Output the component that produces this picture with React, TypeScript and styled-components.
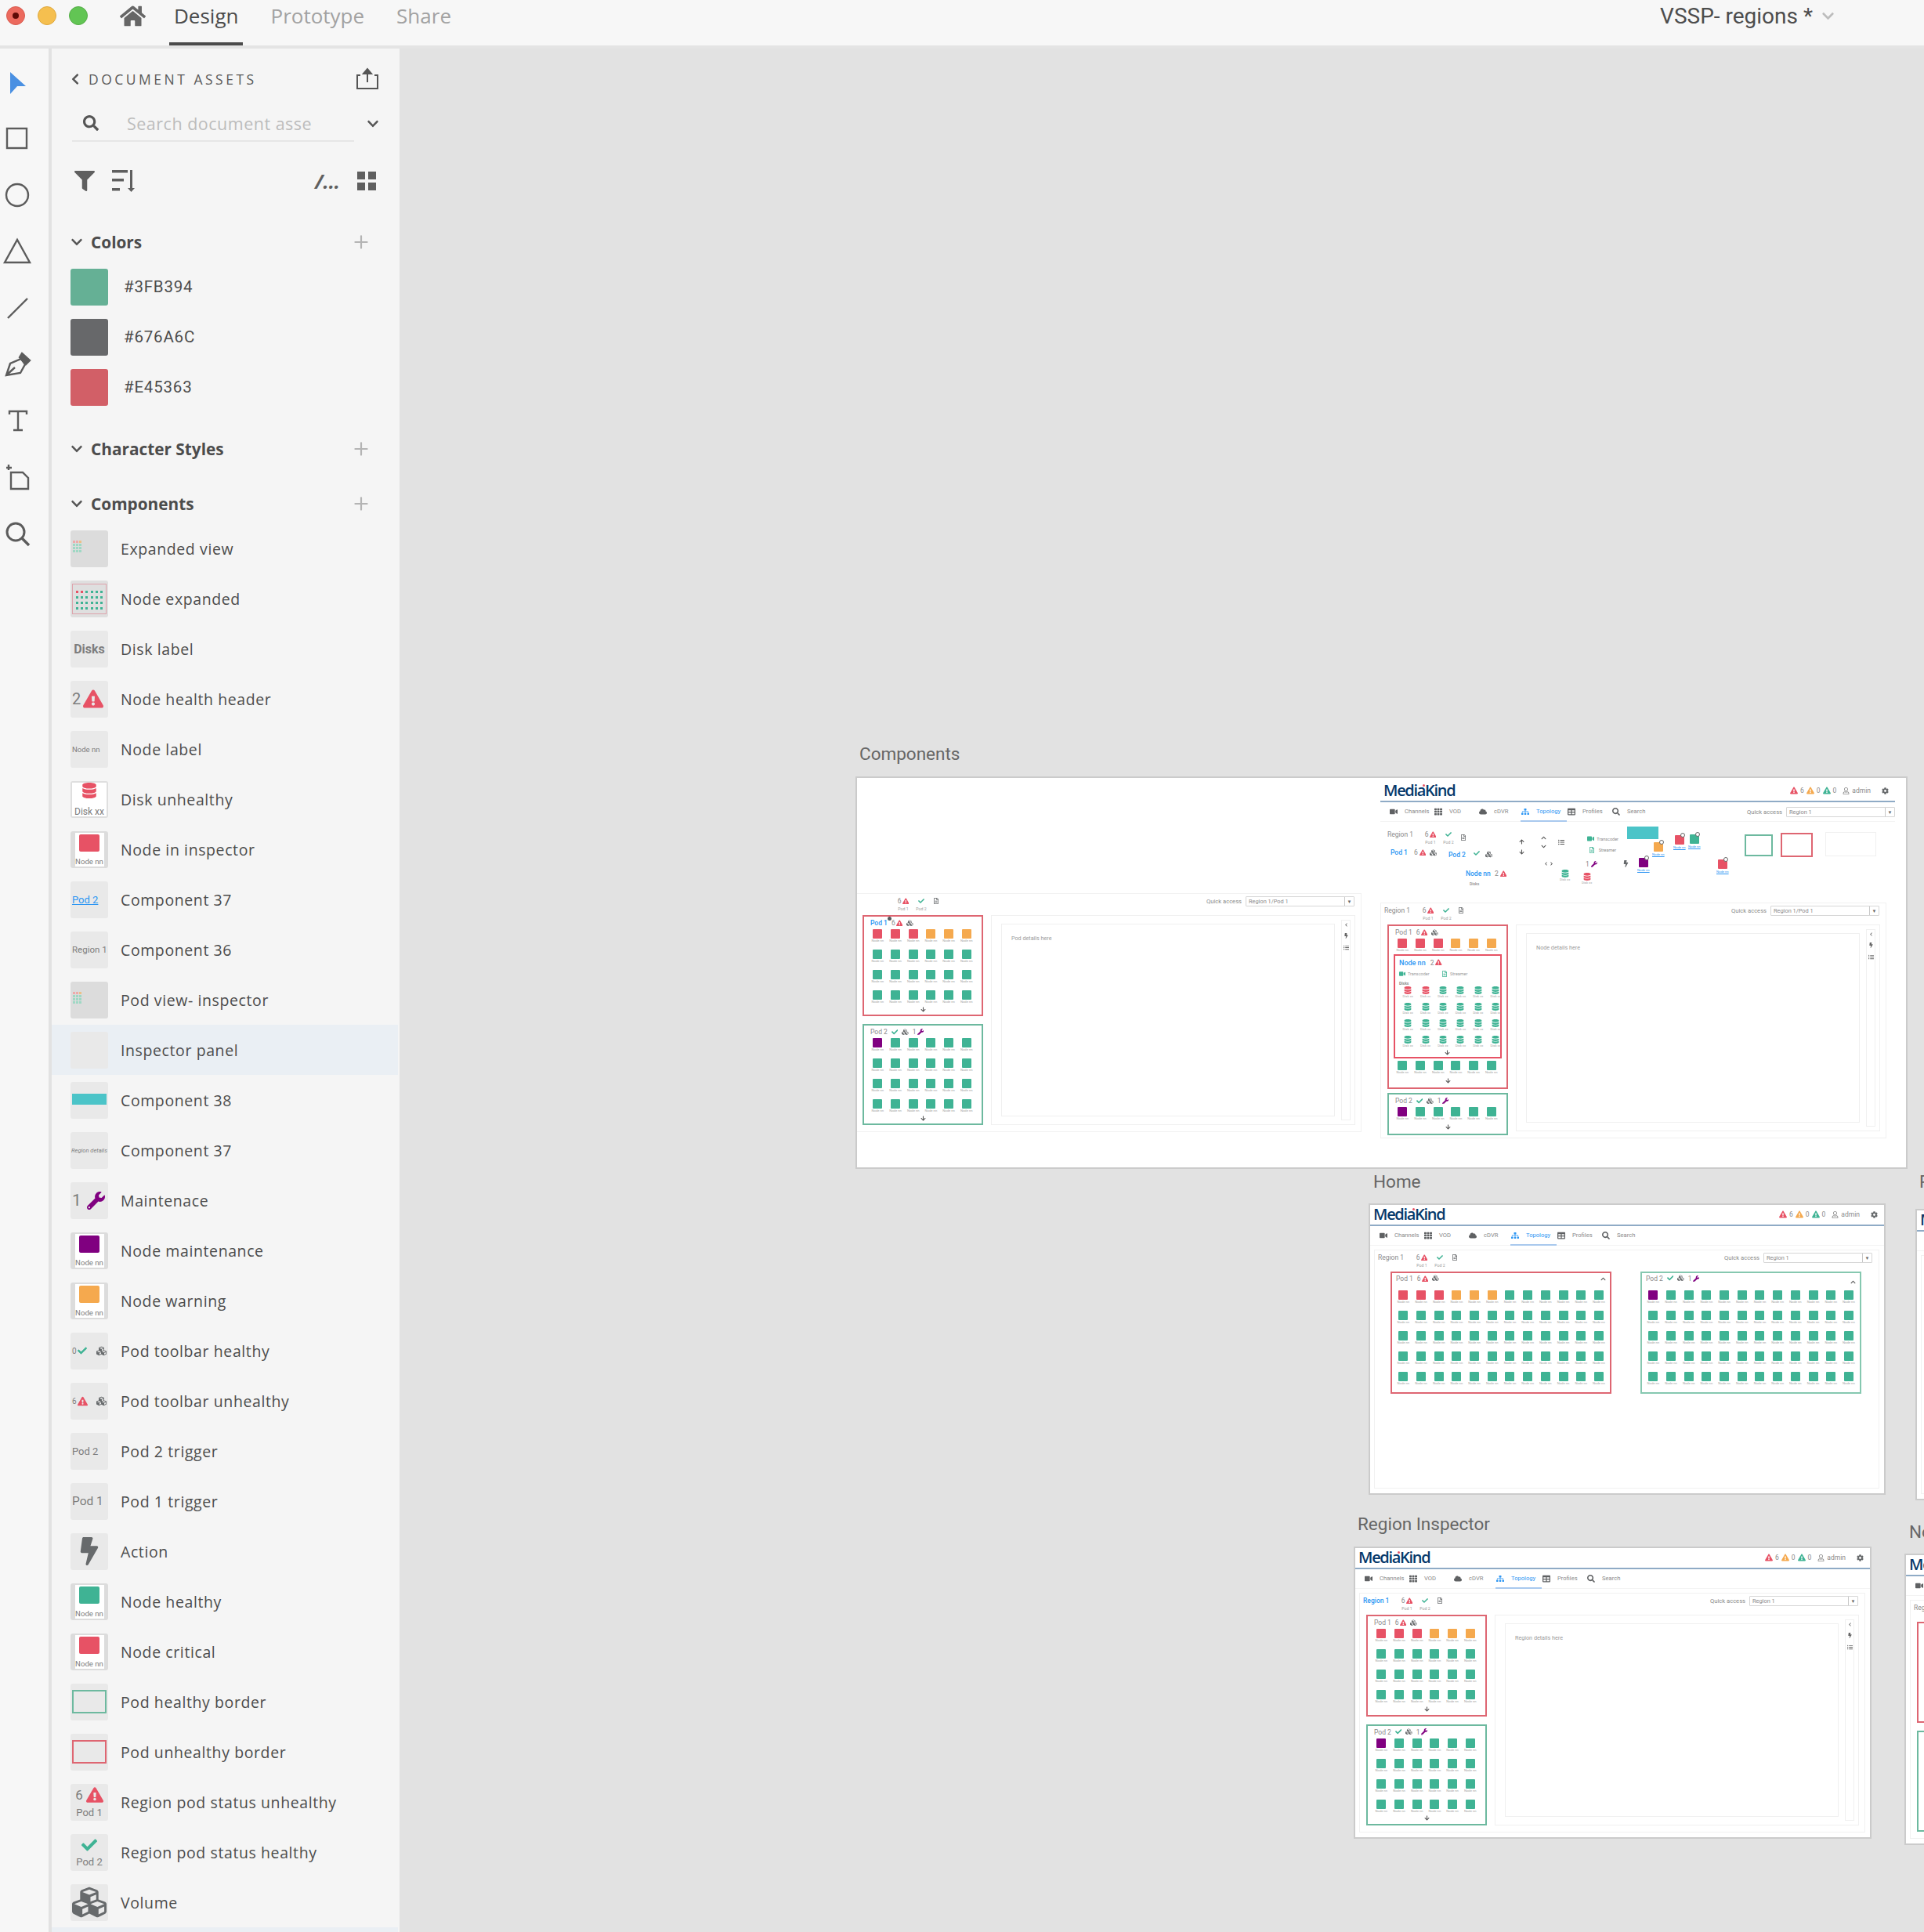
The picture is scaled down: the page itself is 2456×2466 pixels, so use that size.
import React from "react";
import styled, { createGlobalStyle } from "styled-components";
import { Plus } from "lucide-react";
import {
  FaArrowDown,
  FaArrowUp,
  FaBolt,
  FaChevronDown,
  FaChevronLeft,
  FaChevronRight,
  FaChevronUp,
  FaCheck,
  FaCloud,
  FaCog,
  FaCubes,
  FaDatabase,
  FaExclamationTriangle,
  FaFilter,
  FaHome,
  FaListUl,
  FaRegFileAlt,
  FaRegUser,
  FaSearch,
  FaSitemap,
  FaTable,
  FaTh,
  FaVideo,
  FaWrench,
} from "react-icons/fa";

const RED = "#e75265";
const ORANGE = "#f5a94e";
const GREEN = "#3fb394";
const PURPLE = "#800080";
const BLUE = "#2d96f3";
const GREY = "#676a6c";

const CANVAS_X = 510;
const CANVAS_Y = 62;

const GlobalStyle = createGlobalStyle`
  html, body {
    margin: 0;
    padding: 0;
    width: 2456px;
    height: 2466px;
    overflow: hidden;
    background: #e2e2e2;
    font-family: "Roboto", "Liberation Sans", sans-serif;
  }
  * { box-sizing: border-box; }
`;

const Window = styled.div`
  width: 2456px;
  height: 2466px;
  display: flex;
  flex-direction: column;
  overflow: hidden;
`;

const TitleBar = styled.header`
  height: 62px;
  flex: none;
  display: flex;
  align-items: flex-start;
  background: #f7f7f7;
  border-bottom: 4px solid #e4e4e4;
`;

const Lights = styled.div`
  display: flex;
  gap: 16px;
  padding: 8px 0 0 8px;
`;

const Light = styled.span<{ $c: string; $edge: string }>`
  width: 24px;
  height: 24px;
  border-radius: 50%;
  background: ${(p) => p.$c};
  border: 1px solid ${(p) => p.$edge};
  display: flex;
  align-items: center;
  justify-content: center;
`;

const LightDot = styled.span`
  width: 8px;
  height: 8px;
  border-radius: 50%;
  background: #5e0b06;
`;

const HomeButton = styled.div`
  margin-left: 41px;
  height: 40px;
  color: #666;
  display: flex;
  align-items: center;
  font-size: 33px;
`;

const Tabs = styled.nav`
  display: flex;
  margin-left: 30px;
  gap: 29px;
`;

const Tab = styled.div<{ $on?: boolean }>`
  height: 58px;
  padding: 0 6px;
  font-family: "Open Sans", sans-serif;
  font-size: 26px;
  line-height: 41px;
  color: ${(p) => (p.$on ? "#4b4b4b" : "#a2a2a2")};
  border-bottom: 4px solid ${(p) => (p.$on ? "#4b4b4b" : "transparent")};
`;

const DocTitle = styled.div`
  margin-left: auto;
  margin-right: 114px;
  height: 41px;
  display: flex;
  align-items: center;
  gap: 11px;
  font-size: 28px;
  color: #4d4d4d;
  svg {
    color: #bdbdbd;
    font-size: 17px;
  }
`;

const Main = styled.div`
  flex: 1;
  display: flex;
  min-height: 0;
`;

const Rail = styled.aside`
  width: 62px;
  flex: none;
  background: #f7f7f7;
  display: flex;
  flex-direction: column;
  align-items: center;
  padding: 23px 18px 0 0;
  gap: 32px;
  margin-right: 4px;
`;

const RailIcon = styled.svg`
  width: 40px;
  height: 40px;
  flex: none;
  fill: none;
  stroke: #5c5c5c;
  stroke-width: 2.4;
`;

const Panel = styled.aside`
  width: 444px;
  flex: none;
  background: #f5f5f5;
  display: flex;
  flex-direction: column;
  overflow: hidden;
`;

const AssetsHead = styled.div`
  display: flex;
  align-items: center;
  height: 36px;
  margin-top: 24px;
  padding-left: 22px;
  color: #555;
  svg.back {
    font-size: 16px;
  }
`;

const AssetsTitle = styled.span`
  margin-left: 9px;
  font-family: "Open Sans", sans-serif;
  font-size: 17.5px;
  letter-spacing: 3.5px;
  color: #5a5a5a;
`;

const ExportIcon = styled.svg`
  width: 30px;
  height: 30px;
  margin-left: auto;
  margin-right: 26px;
  fill: none;
  stroke: #555;
  stroke-width: 2;
`;

const SearchRow = styled.div`
  display: flex;
  align-items: center;
  margin-top: 19px;
  height: 46px;
  padding-left: 26px;
  color: #555;
`;

const SearchBox = styled.div`
  width: 360px;
  height: 46px;
  display: flex;
  align-items: center;
  padding-left: 14px;
  margin-right: 16px;
  border-bottom: 2px solid #e6e6e6;
  font-size: 20px;
  svg {
    flex: none;
  }
`;

const SearchText = styled.span`
  margin-left: 36px;
  font-family: "Open Sans", sans-serif;
  font-size: 21.5px;
  letter-spacing: 0.5px;
  color: #bcbcbc;
`;

const ToolRow = styled.div`
  display: flex;
  align-items: center;
  margin-top: 35px;
  height: 34px;
  padding: 0 30px 0 29px;
  color: #5f5f5f;
`;

const SortIcon = styled.svg`
  width: 30px;
  height: 28px;
  margin-left: 22px;
  fill: #5f5f5f;
`;

const Ellipsis = styled.span`
  margin-left: auto;
  font-family: "Open Sans", sans-serif;
  font-style: italic;
  font-weight: 700;
  font-size: 25px;
  line-height: 30px;
`;

const GridIcon = styled.div`
  margin-left: 22px;
  width: 24px;
  height: 24px;
  display: grid;
  grid-template-columns: 10px 10px;
  gap: 4px;
  span {
    background: #5f5f5f;
  }
`;

const SectionHead = styled.div<{ $top: number }>`
  display: flex;
  align-items: center;
  height: 30px;
  margin-top: ${(p) => p.$top}px;
  padding: 0 36px 0 24px;
  color: #555;
  svg.fold {
    font-size: 16px;
  }
  svg.add {
    margin-left: auto;
    color: #b4b4b4;
  }
`;

const SectionName = styled.span`
  margin-left: 10px;
  font-family: "Open Sans", sans-serif;
  font-weight: 700;
  font-size: 20.8px;
  color: #4c4c4c;
`;

const ColorList = styled.div`
  margin-top: 19px;
  display: flex;
  flex-direction: column;
  gap: 16px;
  padding-left: 24px;
`;

const ColorRow = styled.div`
  display: flex;
  align-items: center;
  gap: 20px;
  height: 48px;
  font-size: 20.5px;
  letter-spacing: 0.8px;
  color: #4c4c4c;
`;

const Swatch = styled.span<{ $c: string }>`
  width: 48px;
  height: 47px;
  border-radius: 3px;
  background: ${(p) => p.$c};
`;

const CompList = styled.div`
  margin-top: 11px;
  display: flex;
  flex-direction: column;
`;

const CompRow = styled.div<{ $on?: boolean }>`
  height: 64px;
  flex: none;
  display: flex;
  align-items: center;
  padding-left: 24px;
  margin-right: 2px;
  background: ${(p) => (p.$on ? "#eaeff4" : "transparent")};
`;

const CompName = styled.span`
  margin-left: 16px;
  font-family: "Open Sans", sans-serif;
  font-size: 19.5px;
  letter-spacing: 0.6px;
  color: #4c4c4c;
  white-space: nowrap;
`;

const Thumb = styled.div<{ $bg?: string }>`
  position: relative;
  width: 48px;
  height: 47px;
  flex: none;
  border-radius: 3px;
  overflow: hidden;
  background: ${(p) => p.$bg || "#e9e9e9"};
  display: flex;
  align-items: center;
  justify-content: center;
  color: #7d7d7d;
  font-size: 10px;
`;

const ThumbWhite = styled.div<{ $w: number }>`
  width: ${(p) => p.$w}px;
  height: 43px;
  background: #fff;
  display: flex;
  flex-direction: column;
  align-items: center;
  justify-content: space-between;
  font-size: 9.6px;
  color: #7d7d7d;
  white-space: nowrap;
  line-height: 12px;
`;

const ThumbNode = styled.span<{ $c: string }>`
  width: 26px;
  height: 22px;
  margin-top: 2px;
  border-radius: 2px;
  background: ${(p) => p.$c};
`;

const ThumbText = styled.span<{ $s: number; $c?: string; $b?: boolean; $u?: boolean; $i?: boolean }>`
  font-size: ${(p) => p.$s}px;
  color: ${(p) => p.$c || "#7d7d7d"};
  font-weight: ${(p) => (p.$b ? 700 : 400)};
  text-decoration: ${(p) => (p.$u ? "underline" : "none")};
  font-style: ${(p) => (p.$i ? "italic" : "normal")};
  white-space: nowrap;
`;

const ThumbRow = styled.div<{ $gap?: number }>`
  display: flex;
  align-items: center;
  gap: ${(p) => p.$gap ?? 3}px;
  width: 44px;
`;

const ThumbCol = styled.div`
  display: flex;
  flex-direction: column;
  align-items: center;
  gap: 4px;
`;

const ThumbFrame = styled.div<{ $c: string }>`
  width: 44px;
  height: 30px;
  border: 2px solid ${(p) => p.$c};
`;

const ThumbBar = styled.div`
  width: 44px;
  height: 14px;
  margin-top: -3px;
  background: #4bc4c8;
`;

const ThumbMini = styled.div`
  width: 44px;
  height: 39px;
  border: 1px solid #dea3ac;
  padding: 8px 2px 0;
  display: grid;
  grid-template-columns: repeat(6, 1fr);
  grid-auto-rows: 7px;
  justify-items: center;
`;

const ThumbDot = styled.span<{ $c: string }>`
  width: 3px;
  height: 3px;
  background: ${(p) => p.$c};
`;

const ThumbTiny = styled.div`
  position: absolute;
  left: 3px;
  top: 13px;
  width: 10px;
  display: grid;
  grid-template-columns: repeat(3, 3px);
  grid-auto-rows: 3px;
  gap: 1px;
`;

const Canvas = styled.main`
  position: relative;
  flex: 1;
  overflow: hidden;
  background: #e2e2e2;
`;

const ArtLabel = styled.div.attrs<{ $x: number; $y: number }>((p) => ({
  style: { left: p.$x - CANVAS_X, top: p.$y - CANVAS_Y },
}))<{ $x: number; $y: number }>`
  position: absolute;
  font-size: 22.5px;
  line-height: 28px;
  color: #666;
  white-space: nowrap;
`;

const Artboard = styled.section.attrs<{ $x: number; $y: number; $w: number; $h: number }>((p) => ({
  style: { left: p.$x - CANVAS_X, top: p.$y - CANVAS_Y, width: p.$w, height: p.$h },
}))<{ $x: number; $y: number; $w: number; $h: number }>`
  position: absolute;
  background: #fff;
  border: 2px solid #cbcbcb;
  display: flex;
  flex-direction: column;
  overflow: hidden;
`;

const Place = styled.div.attrs<{ $x: number; $y: number }>((p) => ({
  style: { left: p.$x - 1094, top: p.$y - 993 },
}))<{ $x: number; $y: number }>`
  position: absolute;
  display: flex;
  align-items: center;
  white-space: nowrap;
`;

const AppHead = styled.div`
  height: 27px;
  flex: none;
  display: flex;
  align-items: center;
  padding: 0 8px 1px 4px;
  border-bottom: 2px solid #8fabc6;
`;

const Logo = styled.span`
  position: relative;
  font-family: "Open Sans", sans-serif;
  font-weight: 600;
  font-size: 20px;
  letter-spacing: -1.3px;
  line-height: 24px;
  color: #05396b;
`;

const LogoDot = styled.i`
  position: absolute;
  left: 50px;
  top: 4px;
  width: 3px;
  height: 3px;
  border-radius: 50%;
  background: #e75265;
`;

const Alerts = styled.div`
  margin-left: auto;
  display: flex;
  align-items: center;
  font-size: 8.5px;
  color: #8a8a8a;
`;

const AlertItem = styled.span<{ $c: string }>`
  display: flex;
  align-items: center;
  gap: 3px;
  margin-right: 3px;
  svg {
    color: ${(p) => p.$c};
    font-size: 10px;
  }
`;

const HeadUser = styled.span`
  display: flex;
  align-items: center;
  gap: 3px;
  margin: 0 14px 0 5px;
  svg {
    font-size: 9px;
  }
`;

const AppNav = styled.div`
  height: 25px;
  flex: none;
  display: flex;
  align-items: stretch;
  padding-left: 11px;
  border-bottom: 1px solid #f3f3f3;
`;

const NavItem = styled.div<{ $w: number; $on?: boolean }>`
  width: ${(p) => p.$w}px;
  display: flex;
  align-items: center;
  gap: 9px;
  padding-left: 1px;
  margin-bottom: -1px;
  font-size: 7.6px;
  color: ${(p) => (p.$on ? BLUE : "#8a8a8a")};
  border-bottom: 2px solid ${(p) => (p.$on ? "#a9c9ee" : "transparent")};
  svg {
    font-size: 10px;
    flex: none;
    color: ${(p) => (p.$on ? BLUE : "#5f6163")};
  }
`;

const QuickAccess = styled.div`
  margin-left: auto;
  display: flex;
  align-items: center;
  gap: 5px;
  font-size: 7.6px;
  color: #8a8a8a;
`;

const SelectBox = styled.div<{ $w: number }>`
  width: ${(p) => p.$w}px;
  height: 13px;
  display: flex;
  align-items: center;
  justify-content: space-between;
  padding-left: 3px;
  border: 1px solid #d6d6d6;
  border-radius: 1px;
  font-size: 7.4px;
  color: #8a8a8a;
`;

const SelectArrow = styled.span`
  width: 12px;
  height: 11px;
  flex: none;
  display: flex;
  align-items: center;
  justify-content: center;
  border-left: 1px solid #c8c8c8;
  color: #666;
  font-size: 6px;
`;

const ContentPanel = styled.div`
  flex: 1;
  min-height: 0;
  margin: 5px 6px 6px 5px;
  border: 1px solid #f1f1f1;
  display: flex;
  flex-direction: column;
`;

const RegionBar = styled.div`
  height: 27px;
  flex: none;
  display: flex;
  align-items: flex-start;
  padding: 3px 8px 0 4px;
`;

const RegionName = styled.span<{ $on?: boolean; $w: number }>`
  width: ${(p) => p.$w}px;
  flex: none;
  margin-top: 1px;
  font-size: 8.5px;
  font-weight: ${(p) => (p.$on ? 500 : 400)};
  color: ${(p) => (p.$on ? BLUE : "#8a8a8a")};
`;

const StatusCell = styled.div<{ $w: number }>`
  width: ${(p) => p.$w}px;
  flex: none;
  display: flex;
  flex-direction: column;
  align-items: center;
  font-size: 8.5px;
  color: #8a8a8a;
`;

const StatusTop = styled.div`
  height: 12px;
  display: flex;
  align-items: center;
  gap: 1px;
`;

const StatusName = styled.span`
  margin-top: 1px;
  font-size: 5.2px;
  color: #9b9b9b;
`;

const Body = styled.div`
  flex: 1;
  min-height: 0;
  display: flex;
  gap: 10px;
  padding: 0 7px 8px 8px;
`;

const PodColumn = styled.div<{ $gap?: number }>`
  width: 154px;
  flex: none;
  display: flex;
  flex-direction: column;
  gap: ${(p) => p.$gap ?? 10}px;
`;

const PodCard = styled.div<{ $c: string; $h?: number; $pad?: number; $w?: number }>`
  ${(p) => (p.$h ? `height: ${p.$h}px;` : "flex: 1;")}
  ${(p) => (p.$w ? `width: ${p.$w}px;` : "")}
  flex-shrink: 0;
  display: flex;
  flex-direction: column;
  border: 2px solid ${(p) => p.$c};
  padding: 0 0 0 ${(p) => p.$pad ?? 6}px;
`;

const PodTitle = styled.div<{ $h?: number }>`
  position: relative;
  height: ${(p) => p.$h ?? 16}px;
  flex: none;
  display: flex;
  align-items: ${(p) => (p.$h ? "flex-start" : "center")};
  padding-top: ${(p) => (p.$h ? 2 : 0)}px;
  gap: 5px;
  padding-left: 2px;
  font-size: 8.5px;
  color: #8a8a8a;
`;

const TitleIcons = styled.span<{ $c?: string }>`
  display: flex;
  align-items: center;
  gap: 1px;
  svg {
    font-size: 8.5px;
    color: ${(p) => p.$c || GREY};
  }
`;

const CollapseBtn = styled.span<{ $top: number }>`
  position: absolute;
  right: 5px;
  top: ${(p) => p.$top}px;
  color: #555;
  font-size: 7px;
  display: flex;
`;

const NodeGrid = styled.div<{ $cols: number; $pitch?: number; $gap?: number }>`
  display: grid;
  grid-template-columns: repeat(${(p) => p.$cols}, ${(p) => p.$pitch ?? 22.7}px);
  row-gap: ${(p) => p.$gap ?? 9}px;
`;

const NodeCell = styled.div`
  height: 17px;
  display: flex;
  flex-direction: column;
  align-items: center;
  font-size: 4.2px;
  line-height: 5px;
  color: #a5a5a5;
  white-space: nowrap;
`;

const NodeBlock = styled.span<{ $c: string }>`
  width: 12px;
  height: 12px;
  flex: none;
  border-radius: 1px;
  background: ${(p) => p.$c};
`;

const ArrowRow = styled.div`
  flex: 1;
  display: flex;
  align-items: center;
  justify-content: center;
  color: #555;
  font-size: 7px;
  margin-left: -6px;
`;

const Details = styled.div`
  flex: 1;
  min-width: 0;
  display: flex;
  padding: 5px;
  border: 1px solid #f0f0f0;
`;

const DetailsBody = styled.div`
  flex: 1;
  margin: 5px 0 5px 7px;
  padding: 13px 12px;
  border: 1px solid #f0f0f0;
  font-size: 7.2px;
  color: #9a9a9a;
`;

const DetailsSide = styled.div`
  width: 12px;
  flex: none;
  margin-left: 8px;
  border: 1px solid #f0f0f0;
  display: flex;
  flex-direction: column;
  align-items: center;
  gap: 8px;
  padding-top: 3px;
  color: #666;
  font-size: 7px;
`;

const HomeRow = styled.div`
  flex: 1;
  display: flex;
  align-items: flex-start;
  justify-content: space-between;
  padding: 0 22px 0 20px;
`;

const NestedCard = styled.div`
  width: 138px;
  height: 133px;
  margin: 3px 0 0 0;
  flex: none;
  display: flex;
  flex-direction: column;
  border: 2px solid ${RED};
  padding-left: 5px;
`;

const NestedTitle = styled.div`
  height: 17px;
  display: flex;
  align-items: center;
  gap: 6px;
  font-size: 9px;
  color: ${BLUE};
  font-weight: 500;
`;

const ServiceRow = styled.div`
  height: 12px;
  display: flex;
  align-items: center;
  gap: 4px;
  font-size: 5.5px;
  color: #9b9b9b;
  svg {
    color: ${GREEN};
    font-size: 8px;
  }
`;

const ServiceItem = styled.span<{ $w?: number }>`
  display: flex;
  align-items: center;
  gap: 3px;
  width: ${(p) => p.$w ?? 50}px;
`;

const DisksLabel = styled.div`
  height: 10px;
  font-size: 5px;
  font-weight: 700;
  color: #8a8a8a;
  line-height: 12px;
`;

const DiskCell = styled.div<{ $c: string }>`
  height: 16px;
  display: flex;
  flex-direction: column;
  align-items: center;
  font-size: 4.2px;
  line-height: 6px;
  color: #a5a5a5;
  white-space: nowrap;
  svg {
    font-size: 10px;
    color: ${(p) => p.$c};
  }
`;

const Loose = styled.span<{ $s?: number; $c?: string; $b?: boolean }>`
  display: flex;
  align-items: center;
  gap: 2px;
  font-size: ${(p) => p.$s ?? 8.5}px;
  font-weight: ${(p) => (p.$b ? 500 : 400)};
  color: ${(p) => p.$c || "#8a8a8a"};
`;

const LooseBox = styled.div<{ $w: number; $h: number; $c: string; $t?: number }>`
  width: ${(p) => p.$w}px;
  height: ${(p) => p.$h}px;
  border: ${(p) => p.$t ?? 2}px solid ${(p) => p.$c};
`;

const LooseBar = styled.div`
  width: 40px;
  height: 16px;
  background: #4bc4c8;
`;

const LooseNode = styled.div`
  position: relative;
  display: flex;
  flex-direction: column;
  align-items: center;
  gap: 1px;
  font-size: 4.2px;
  color: ${BLUE};
  text-decoration: underline;
`;

const ZoomBadge = styled.i`
  position: absolute;
  right: 1px;
  top: -3px;
  width: 6px;
  height: 6px;
  border-radius: 50%;
  background: #fff;
  border: 1.5px solid #666;
`;

const PinBadge = styled.i`
  position: absolute;
  left: 24px;
  top: 0;
  width: 5px;
  height: 5px;
  border-radius: 50%;
  background: #55595c;
`;

const LeftWrap = styled.div`
  width: 657px;
  height: 316px;
  display: flex;
  flex-direction: column;
`;

const TopWrap = styled.div`
  width: 657px;
  display: flex;
  flex-direction: column;
`;

const NodeWrap = styled.div`
  width: 657px;
  height: 312px;
  display: flex;
  flex-direction: column;
`;

const NodeGapRow = styled.div`
  margin-top: 3px;
`;

const ColWrap = styled.div`
  flex: 1;
  min-height: 0;
  display: flex;
  flex-direction: column;
`;

const Tri = ({ c = RED, s = 8.5 }: { c?: string; s?: number }) => <FaExclamationTriangle color={c} size={s} />;

const NavList = () => (
  <>
    <NavItem $w={57}><FaVideo />Channels</NavItem>
    <NavItem $w={57}><FaTh />VOD</NavItem>
    <NavItem $w={54}><FaCloud />cDVR</NavItem>
    <NavItem $w={59} $on><FaSitemap />Topology</NavItem>
    <NavItem $w={57}><FaTable />Profiles</NavItem>
    <NavItem $w={50}><FaSearch />Search</NavItem>
  </>
);

const HeadBar = () => (
  <AppHead>
    <Logo>MediaKind<LogoDot /></Logo>
    <Alerts>
      <AlertItem $c={RED}><FaExclamationTriangle />6</AlertItem>
      <AlertItem $c={ORANGE}><FaExclamationTriangle />0</AlertItem>
      <AlertItem $c={GREEN}><FaExclamationTriangle />0</AlertItem>
      <HeadUser><FaRegUser />admin</HeadUser>
      <FaCog color={GREY} size={9} />
    </Alerts>
  </AppHead>
);

const Quick = ({ value, w }: { value: string; w: number }) => (
  <QuickAccess>
    Quick access
    <SelectBox $w={w}>
      {value}
      <SelectArrow>▼</SelectArrow>
    </SelectBox>
  </QuickAccess>
);

const PodStatus = () => (
  <>
    <StatusCell $w={28}>
      <StatusTop>6<Tri /></StatusTop>
      <StatusName>Pod 1</StatusName>
    </StatusCell>
    <StatusCell $w={18}>
      <StatusTop><FaCheck color={GREEN} size={8} /></StatusTop>
      <StatusName>Pod 2</StatusName>
    </StatusCell>
    <StatusCell $w={20}>
      <StatusTop><FaRegFileAlt color={GREY} size={8} /></StatusTop>
    </StatusCell>
  </>
);

const nodeColors = (bad: string[], n: number) =>
  Array.from({ length: n }, (_, i) => bad[i] || GREEN);

const Nodes = ({ cols, colors, pitch }: { cols: number; colors: string[]; pitch?: number }) => (
  <NodeGrid $cols={cols} $pitch={pitch}>
    {colors.map((c, i) => (
      <NodeCell key={i}>
        <NodeBlock $c={c} />
        Node nn
      </NodeCell>
    ))}
  </NodeGrid>
);

const POD1 = [RED, RED, RED, ORANGE, ORANGE, ORANGE];
const POD2 = [PURPLE];

const PodOneTitle = ({ blue, h, top }: { blue?: boolean; h?: number; top?: number }) => (
  <PodTitle $h={h}>
    <Loose $c={blue ? BLUE : undefined} $b={blue}>Pod 1</Loose>
    {blue && <PinBadge />}
    <TitleIcons $c={RED}>
      <Loose>6</Loose>
      <FaExclamationTriangle />
    </TitleIcons>
    <TitleIcons><FaCubes /></TitleIcons>
    {top !== undefined && <CollapseBtn $top={top}><FaChevronUp /></CollapseBtn>}
  </PodTitle>
);

const PodTwoTitle = ({ h, top }: { h?: number; top?: number }) => (
  <PodTitle $h={h}>
    <Loose>Pod 2</Loose>
    <TitleIcons $c={GREEN}><FaCheck /></TitleIcons>
    <TitleIcons><FaCubes /></TitleIcons>
    <TitleIcons $c={PURPLE}>
      <Loose>1</Loose>
      <FaWrench />
    </TitleIcons>
    {top !== undefined && <CollapseBtn $top={top}><FaChevronUp /></CollapseBtn>}
  </PodTitle>
);

const DetailsPane = ({ text }: { text: string }) => (
  <Details>
    <DetailsBody>{text}</DetailsBody>
    <DetailsSide>
      <FaChevronLeft size={5} />
      <FaBolt />
      <FaListUl />
    </DetailsSide>
  </Details>
);

const InspectorBody = ({ text, region, regionOn, value, blue }: { text: string; region?: string; regionOn?: boolean; value: string; blue?: boolean }) => (
  <ContentPanel>
    <RegionBar>
      <RegionName $on={regionOn} $w={42}>{region}</RegionName>
      <PodStatus />
      <Quick value={value} w={139} />
    </RegionBar>
    <Body>
      <PodColumn>
        <PodCard $c="#de6672">
          <PodOneTitle blue={blue} />
          <Nodes cols={6} colors={nodeColors(POD1, 24)} />
          <ArrowRow><FaArrowDown /></ArrowRow>
        </PodCard>
        <PodCard $c="#6db99f">
          <PodTwoTitle />
          <Nodes cols={6} colors={nodeColors(POD2, 24)} />
          <ArrowRow><FaArrowDown /></ArrowRow>
        </PodCard>
      </PodColumn>
      <DetailsPane text={text} />
    </Body>
  </ContentPanel>
);

const AppShell = ({ children }: { children: React.ReactNode }) => (
  <>
    <HeadBar />
    <AppNav><NavList /></AppNav>
    {children}
  </>
);

const HomeBody = () => (
  <ContentPanel>
    <RegionBar>
      <RegionName $w={42}>Region 1</RegionName>
      <PodStatus />
      <Quick value="Region 1" w={139} />
    </RegionBar>
    <HomeRow>
      <PodCard $c="#de6672" $h={156} $w={282} $pad={3}>
        <PodOneTitle h={22} top={4} />
        <Nodes cols={12} colors={nodeColors(POD1, 60)} />
      </PodCard>
      <PodCard $c="#86c8b0" $h={156} $w={282} $pad={3}>
        <PodTwoTitle h={22} top={8} />
        <Nodes cols={12} colors={nodeColors(POD2, 60)} />
      </PodCard>
    </HomeRow>
  </ContentPanel>
);

const Disks = () => (
  <NodeGrid $cols={6} $pitch={22.4} $gap={5}>
    {Array.from({ length: 24 }, (_, i) => (
      <DiskCell key={i} $c={i < 2 ? RED : GREEN}>
        <FaDatabase />
        Disk xx
      </DiskCell>
    ))}
  </NodeGrid>
);

const LooseNodeBlock = ({ c, label = "Node nn" }: { c: string; label?: string }) => (
  <LooseNode>
    <NodeBlock $c={c} />
    <ZoomBadge />
    {label}
  </LooseNode>
);

const ComponentsBoard = () => (
  <Artboard $x={1092} $y={991} $w={1343} $h={501}>
    <Place $x={1087} $y={1135}>
      <LeftWrap>
        <InspectorBody text="Pod details here" value="Region 1/Pod 1" blue />
      </LeftWrap>
    </Place>

    <Place $x={1762} $y={997}>
      <TopWrap>
        <HeadBar />
        <AppNav>
          <NavList />
          <Quick value="Region 1" w={139} />
        </AppNav>
      </TopWrap>
    </Place>

    <Place $x={1771} $y={1060}><Loose>Region 1</Loose></Place>
    <Place $x={1812} $y={1059}><PodStatus /></Place>
    <Place $x={1775} $y={1083}><Loose $c={BLUE} $b>Pod 1</Loose></Place>
    <Place $x={1805} $y={1083}><Loose>6<Tri /></Loose></Place>
    <Place $x={1825} $y={1084}><FaCubes color={GREY} size={9} /></Place>
    <Place $x={1849} $y={1086}><Loose $c={BLUE} $b>Pod 2</Loose></Place>
    <Place $x={1881} $y={1085}><FaCheck color={GREEN} size={8} /></Place>
    <Place $x={1896} $y={1086}><FaCubes color={GREY} size={9} /></Place>
    <Place $x={1871} $y={1110}><Loose $c={BLUE} $b>Node nn</Loose></Place>
    <Place $x={1908} $y={1110}><Loose>2<Tri /></Loose></Place>
    <Place $x={1876} $y={1125}><Loose $s={5} $b>Disks</Loose></Place>

    <Place $x={1939} $y={1071}><FaArrowUp color="#555" size={7} /></Place>
    <Place $x={1939} $y={1084}><FaArrowDown color="#555" size={7} /></Place>
    <Place $x={1967} $y={1066}><FaChevronUp color="#555" size={7} /></Place>
    <Place $x={1967} $y={1077}><FaChevronDown color="#555" size={7} /></Place>
    <Place $x={1989} $y={1071}><FaListUl color="#555" size={8} /></Place>
    <Place $x={1971} $y={1100}><FaChevronLeft color="#555" size={5} /></Place>
    <Place $x={1978} $y={1100}><FaChevronRight color="#555" size={5} /></Place>
    <Place $x={2026} $y={1066}>
      <Loose $s={5.5}><FaVideo color={GREEN} size={9} />&nbsp;Transcoder</Loose>
    </Place>
    <Place $x={2028} $y={1081}>
      <Loose $s={5.5}><FaRegFileAlt color={GREEN} size={8} />&nbsp;&nbsp;Streamer</Loose>
    </Place>
    <Place $x={2024} $y={1098}><Loose>1<FaWrench color={PURPLE} size={8} /></Loose></Place>
    <Place $x={2071} $y={1098}><FaBolt color={GREY} size={9} /></Place>
    <Place $x={1991} $y={1110}>
      <DiskCell $c={GREEN}><FaDatabase />Disk xx</DiskCell>
    </Place>
    <Place $x={2019} $y={1114}>
      <DiskCell $c={RED}><FaDatabase />Disk xx</DiskCell>
    </Place>
    <Place $x={2077} $y={1055}><LooseBar /></Place>
    <Place $x={2109} $y={1075}><LooseNodeBlock c={ORANGE} /></Place>
    <Place $x={2136} $y={1066}><LooseNodeBlock c={RED} /></Place>
    <Place $x={2155} $y={1065}><LooseNodeBlock c={GREEN} /></Place>
    <Place $x={2090} $y={1095}><LooseNodeBlock c={PURPLE} /></Place>
    <Place $x={2191} $y={1097}><LooseNodeBlock c={RED} /></Place>
    <Place $x={2227} $y={1065}><LooseBox $w={36} $h={28} $c="#6db99f" /></Place>
    <Place $x={2273} $y={1063}><LooseBox $w={41} $h={31} $c="#de6672" /></Place>
    <Place $x={2330} $y={1062}><LooseBox $w={65} $h={31} $c="#f0f0f0" $t={1} /></Place>

    <Place $x={1757} $y={1147}>
      <NodeWrap>
        <ContentPanel>
          <RegionBar>
            <RegionName $w={42}>Region 1</RegionName>
            <PodStatus />
            <Quick value="Region 1/Pod 1" w={139} />
          </RegionBar>
          <Body>
            <PodColumn $gap={5}>
              <PodCard $c="#de6672" $h={210}>
                <PodOneTitle />
                <Nodes cols={6} colors={nodeColors(POD1, 6)} />
                <NestedCard>
                  <NestedTitle>Node nn <Loose>2<Tri /></Loose></NestedTitle>
                  <ServiceRow>
                    <ServiceItem><FaVideo />Transcoder</ServiceItem>
                    <ServiceItem><FaRegFileAlt />Streamer</ServiceItem>
                  </ServiceRow>
                  <DisksLabel>Disks</DisksLabel>
                  <Disks />
                  <ArrowRow><FaArrowDown /></ArrowRow>
                </NestedCard>
                <NodeGapRow>
                  <Nodes cols={6} colors={nodeColors([], 6)} />
                </NodeGapRow>
                <ArrowRow><FaArrowDown /></ArrowRow>
              </PodCard>
              <PodCard $c="#6db99f" $h={54}>
                <PodTwoTitle />
                <Nodes cols={6} colors={nodeColors(POD2, 6)} />
                <ArrowRow><FaArrowDown /></ArrowRow>
              </PodCard>
            </PodColumn>
            <DetailsPane text="Node details here" />
          </Body>
        </ContentPanel>
      </NodeWrap>
    </Place>
  </Artboard>
);

type Comp = { name: string; thumb: React.ReactNode; bg?: string; on?: boolean };

const nodeThumb = (c: string, w = 37) => (
  <ThumbWhite $w={w}>
    <ThumbNode $c={c} />
    Node nn
  </ThumbWhite>
);

const tinyDots = (
  <ThumbTiny>
    {Array.from({ length: 12 }, (_, i) => (
      <ThumbDot key={i} $c={i < 2 ? "#eaa" : i < 3 ? "#ecc087" : "#9fd8c4"} />
    ))}
  </ThumbTiny>
);

const components: Comp[] = [
  { name: "Expanded view", bg: "#dcdcdc", thumb: tinyDots },
  {
    name: "Node expanded",
    bg: "#dfdfdf",
    thumb: (
      <ThumbMini>
        {Array.from({ length: 24 }, (_, i) => (
          <ThumbDot key={i} $c={i < 2 ? RED : GREEN} />
        ))}
      </ThumbMini>
    ),
  },
  { name: "Disk label", thumb: <ThumbText $s={16} $b>Disks</ThumbText> },
  {
    name: "Node health header",
    thumb: (
      <ThumbRow>
        <ThumbText $s={20}>2</ThumbText>
        <FaExclamationTriangle color={RED} size={26} />
      </ThumbRow>
    ),
  },
  { name: "Node label", thumb: <ThumbRow><ThumbText $s={9.5}>Node nn</ThumbText></ThumbRow> },
  {
    name: "Disk unhealthy",
    bg: "#dfdfdf",
    thumb: (
      <ThumbWhite $w={44}>
        <FaDatabase color={RED} size={20} />
        <ThumbText $s={12}>Disk xx</ThumbText>
      </ThumbWhite>
    ),
  },
  { name: "Node in inspector", bg: "#dcdcdc", thumb: nodeThumb(RED) },
  { name: "Component 37", thumb: <ThumbRow><ThumbText $s={13} $c={BLUE} $u>Pod 2</ThumbText></ThumbRow> },
  { name: "Component 36", thumb: <ThumbRow><ThumbText $s={11.5}>Region 1</ThumbText></ThumbRow> },
  { name: "Pod view- inspector", bg: "#dcdcdc", thumb: tinyDots },
  { name: "Inspector panel", on: true, thumb: null },
  { name: "Component 38", thumb: <ThumbBar /> },
  { name: "Component 37", thumb: <ThumbText $s={7.5} $i>Region details</ThumbText> },
  {
    name: "Maintenace",
    thumb: (
      <ThumbRow $gap={7}>
        <ThumbText $s={21}>1</ThumbText>
        <FaWrench color={PURPLE} size={23} />
      </ThumbRow>
    ),
  },
  { name: "Node maintenance", bg: "#dcdcdc", thumb: nodeThumb(PURPLE) },
  { name: "Node warning", bg: "#dcdcdc", thumb: nodeThumb(ORANGE) },
  {
    name: "Pod toolbar healthy",
    thumb: (
      <ThumbRow $gap={1}>
        <ThumbText $s={10}>0</ThumbText>
        <FaCheck color={GREEN} size={12} />
        <FaCubes color={GREY} size={13} style={{ marginLeft: "auto" }} />
      </ThumbRow>
    ),
  },
  {
    name: "Pod toolbar unhealthy",
    thumb: (
      <ThumbRow $gap={1}>
        <ThumbText $s={10}>6</ThumbText>
        <FaExclamationTriangle color={RED} size={13} />
        <FaCubes color={GREY} size={13} style={{ marginLeft: "auto" }} />
      </ThumbRow>
    ),
  },
  { name: "Pod 2 trigger", thumb: <ThumbRow><ThumbText $s={13}>Pod 2</ThumbText></ThumbRow> },
  { name: "Pod 1 trigger", thumb: <ThumbRow><ThumbText $s={15.5}>Pod 1</ThumbText></ThumbRow> },
  { name: "Action", thumb: <FaBolt color={GREY} size={36} /> },
  { name: "Node healthy", bg: "#dcdcdc", thumb: nodeThumb(GREEN) },
  { name: "Node critical", bg: "#dcdcdc", thumb: nodeThumb(RED) },
  { name: "Pod healthy border", thumb: <ThumbFrame $c="#6db99f" /> },
  { name: "Pod unhealthy border", thumb: <ThumbFrame $c="#de6672" /> },
  {
    name: "Region pod status unhealthy",
    thumb: (
      <ThumbCol>
        <ThumbRow $gap={4}>
          <ThumbText $s={17}>&nbsp;6</ThumbText>
          <FaExclamationTriangle color={RED} size={22} />
        </ThumbRow>
        <ThumbText $s={13}>Pod 1</ThumbText>
      </ThumbCol>
    ),
  },
  {
    name: "Region pod status healthy",
    thumb: (
      <ThumbCol>
        <FaCheck color={GREEN} size={20} />
        <ThumbText $s={13}>Pod 2</ThumbText>
      </ThumbCol>
    ),
  },
  { name: "Volume", thumb: <FaCubes color={GREY} size={44} /> },
  { name: "", on: true, thumb: null },
];

export default function App() {
  return (
    <Window>
      <GlobalStyle />
      <TitleBar>
        <Lights>
          <Light $c="#ec6a5e" $edge="#d95c50"><LightDot /></Light>
          <Light $c="#f5bf4f" $edge="#dfa93f" />
          <Light $c="#62c554" $edge="#54ad47" />
        </Lights>
        <HomeButton><FaHome /></HomeButton>
        <Tabs>
          <Tab $on>Design</Tab>
          <Tab>Prototype</Tab>
          <Tab>Share</Tab>
        </Tabs>
        <DocTitle>VSSP- regions *<FaChevronDown /></DocTitle>
      </TitleBar>
      <Main>
        <Rail>
          <RailIcon viewBox="0 0 40 40" style={{ stroke: "none" }}>
            <path d="M11 7 L31 25 H20 L11 35 Z" fill="#4a90e2" />
          </RailIcon>
          <RailIcon viewBox="0 0 40 40"><rect x="7" y="7" width="25" height="25" /></RailIcon>
          <RailIcon viewBox="0 0 40 40"><circle cx="20" cy="20" r="14" /></RailIcon>
          <RailIcon viewBox="0 0 40 40"><path d="M20 5 L36 34 H4 Z" /></RailIcon>
          <RailIcon viewBox="0 0 40 40"><path d="M8 33 L33 8" /></RailIcon>
          <RailIcon viewBox="0 0 40 40">
            <path d="M6 34 L11 19 L25 13 L30 20 L24 31 Z M6 34 L17 24" />
            <path d="M26 6 L36 15 L31 20 L23 11 Z" fill="#5c5c5c" />
          </RailIcon>
          <RailIcon viewBox="0 0 40 40"><path d="M10 12 V8 H32 V12 M21 8 V32 M15 32 H27" /></RailIcon>
          <RailIcon viewBox="0 0 40 40"><path d="M12 14 H27 L34 21 V35 H12 Z M6 8 H13 M9 4 V11" /></RailIcon>
          <RailIcon viewBox="0 0 40 40">
            <circle cx="18" cy="18" r="11" strokeWidth="3" />
            <path d="M26 26 L35 35" strokeWidth="3.4" />
          </RailIcon>
        </Rail>
        <Panel>
          <AssetsHead>
            <FaChevronLeft className="back" />
            <AssetsTitle>DOCUMENT ASSETS</AssetsTitle>
            <ExportIcon viewBox="0 0 30 30">
              <path d="M6 10 H2 V27 H28 V10 H24 M15 19 V3" />
              <path d="M10 8 L15 2 L20 8 Z" fill="#555" />
            </ExportIcon>
          </AssetsHead>
          <SearchRow>
            <SearchBox>
              <FaSearch />
              <SearchText>Search document asse</SearchText>
            </SearchBox>
            <FaChevronDown size={16} />
          </SearchRow>
          <ToolRow>
            <FaFilter size={26} />
            <SortIcon viewBox="0 0 30 28">
              <rect x="0" y="0" width="20" height="3.5" />
              <rect x="0" y="11" width="15" height="3.5" />
              <rect x="0" y="23" width="10" height="3.5" />
              <rect x="23" y="0" width="3" height="24" />
              <path d="M20 23 H29 L24.5 28 Z" />
            </SortIcon>
            <Ellipsis>/...</Ellipsis>
            <GridIcon><span /><span /><span /><span /></GridIcon>
          </ToolRow>
          <SectionHead $top={49}>
            <FaChevronDown className="fold" />
            <SectionName>Colors</SectionName>
            <Plus className="add" size={26} strokeWidth={2} />
          </SectionHead>
          <ColorList>
            <ColorRow><Swatch $c="#65b095" />#3FB394</ColorRow>
            <ColorRow><Swatch $c="#67686a" />#676A6C</ColorRow>
            <ColorRow><Swatch $c="#d25f67" />#E45363</ColorRow>
          </ColorList>
          <SectionHead $top={41}>
            <FaChevronDown className="fold" />
            <SectionName>Character Styles</SectionName>
            <Plus className="add" size={26} strokeWidth={2} />
          </SectionHead>
          <SectionHead $top={42}>
            <FaChevronDown className="fold" />
            <SectionName>Components</SectionName>
            <Plus className="add" size={26} strokeWidth={2} />
          </SectionHead>
          <CompList>
            {components.map((c, i) => (
              <CompRow key={i} $on={c.on}>
                {c.name && <Thumb $bg={c.bg}>{c.thumb}</Thumb>}
                {c.name && <CompName>{c.name}</CompName>}
              </CompRow>
            ))}
          </CompList>
        </Panel>
        <Canvas>
          <ArtLabel $x={1097} $y={948}>Components</ArtLabel>
          <ComponentsBoard />

          <ArtLabel $x={1753} $y={1494}>Home</ArtLabel>
          <Artboard $x={1747} $y={1536} $w={660} $h={372}>
            <AppShell><HomeBody /></AppShell>
          </Artboard>

          <ArtLabel $x={1733} $y={1931}>Region Inspector</ArtLabel>
          <Artboard $x={1728} $y={1974} $w={661} $h={373}>
            <AppShell>
              <ColWrap>
                <InspectorBody text="Region details here" region="Region 1" regionOn value="Region 1" />
              </ColWrap>
            </AppShell>
          </Artboard>

          <ArtLabel $x={2450} $y={1494}>Pod Inspector</ArtLabel>
          <Artboard $x={2445} $y={1543} $w={660} $h={372}>
            <AppShell>
              <ColWrap>
                <InspectorBody text="Pod details here" region="Region 1" value="Region 1/Pod 1" />
              </ColWrap>
            </AppShell>
          </Artboard>

          <ArtLabel $x={2437} $y={1941}>Node Inspector</ArtLabel>
          <Artboard $x={2431} $y={1983} $w={660} $h={372}>
            <AppShell>
              <ColWrap>
                <InspectorBody text="Node details here" region="Region 1" value="Region 1/Pod 1" />
              </ColWrap>
            </AppShell>
          </Artboard>
        </Canvas>
      </Main>
    </Window>
  );
}
